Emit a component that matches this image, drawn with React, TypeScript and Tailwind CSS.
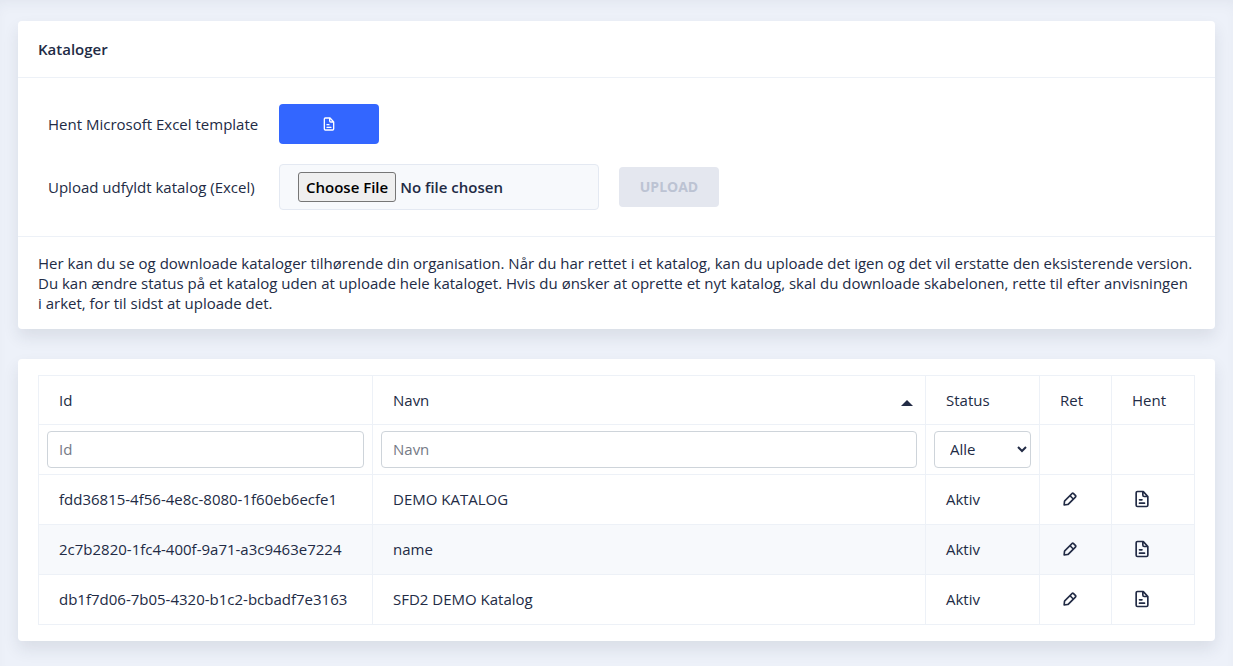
import {useState} from "react";
import type {ReactNode} from "react";

type Katalog = {
  id: string;
  navn: string;
  status: string;
};

const kataloger: Katalog[] = [
  {id: "fdd36815-4f56-4e8c-8080-1f60eb6ecfe1", navn: "DEMO KATALOG", status: "Aktiv"},
  {id: "2c7b2820-1fc4-400f-9a71-a3c9463e7224", navn: "name", status: "Aktiv"},
  {id: "db1f7d06-7b05-4320-b1c2-bcbadf7e3163", navn: "SFD2 DEMO Katalog", status: "Aktiv"},
];

const FileTextIcon = ({className}: {className: string}) => (
  <svg viewBox="0 0 24 24" fill="currentColor" className={className} aria-hidden="true">
    <path d="M15 16H9a1 1 0 0 0 0 2h6a1 1 0 0 0 0-2z" />
    <path d="M9 14h3a1 1 0 0 0 0-2H9a1 1 0 0 0 0 2z" />
    <path d="M19.74 8.33l-5.44-6a1 1 0 0 0-.74-.33h-7A2.53 2.53 0 0 0 4 4.5v15A2.53 2.53 0 0 0 6.56 22h10.88A2.53 2.53 0 0 0 20 19.5V9a1 1 0 0 0-.26-.67zM14 5l2.74 3h-2a.79.79 0 0 1-.74-.85zm3.44 15H6.56a.53.53 0 0 1-.56-.5v-15a.53.53 0 0 1 .56-.5H12v3.15A2.79 2.79 0 0 0 14.71 10H18v9.5a.53.53 0 0 1-.56.5z" />
  </svg>
);

const EditIcon = ({className}: {className: string}) => (
  <svg viewBox="0 0 24 24" fill="currentColor" className={className} aria-hidden="true">
    <path d="M19.4 7.34L16.66 4.6A2 2 0 0 0 14 4.53l-9 9a2 2 0 0 0-.57 1.21L4 18.91a1 1 0 0 0 .29.8A1 1 0 0 0 5 20h.09l4.17-.38a2 2 0 0 0 1.21-.57l9-9a1.92 1.92 0 0 0-.07-2.71zM9.08 17.62l-3 .28.27-3L12 9.32l2.7 2.7zM16 10.68L13.32 8l1.95-2L18 8.73z" />
  </svg>
);

const Card = ({children}: {children: ReactNode}) => (
  <section className="rounded bg-white shadow-[0_8px_16px_0_rgba(44,51,73,0.1)]">
    {children}
  </section>
);

const headCell = "border border-[#edf1f7] px-5 text-left font-normal";
const cell = "border border-[#edf1f7] px-5 pb-0.5";
const filterCell = "border border-[#edf1f7] px-2";
const filterField =
  "block h-[37px] w-full rounded border border-[#ced4da] bg-white px-[11px] pb-0.5 placeholder:text-[#757a86]";

const App = () => {
  const [file, setFile] = useState<File | null>(null);
  const [idFilter, setIdFilter] = useState("");
  const [navnFilter, setNavnFilter] = useState("");
  const [status, setStatus] = useState("");
  const [ascending, setAscending] = useState(true);

  const rows = kataloger
    .filter(
      k =>
        k.id.includes(idFilter) &&
        k.navn.toLowerCase().includes(navnFilter.toLowerCase()) &&
        (status === "" || k.status === status),
    )
    .sort((a, b) => a.navn.localeCompare(b.navn) * (ascending ? 1 : -1));

  return (
    <main className="flex min-h-screen flex-col gap-[30px] bg-[#edf1f9] px-[18px] pt-[21px] pb-[25px] font-['Open_Sans',sans-serif] text-[15px] leading-5 text-[#222b45] shadow-[inset_0_8px_16px_-8px_rgba(44,51,73,0.08)]">
      <Card>
        <h1 className="border-b border-[#edf1f7] px-5 py-[18px] font-semibold">Kataloger</h1>
        <div className="grid grid-cols-[231px_1fr] items-center gap-y-5 border-b border-[#edf1f7] py-[26px] pl-[30px]">
          <span>Hent Microsoft Excel template</span>
          <div>
            <button
              type="button"
              aria-label="Hent template"
              className="flex h-10 w-[100px] items-center justify-center rounded bg-[#3366ff] text-white hover:bg-[#598bff]"
            >
              <FileTextIcon className="h-4 w-4" />
            </button>
          </div>
          <label htmlFor="katalogFil">Upload udfyldt katalog (Excel)</label>
          <div className="flex items-center gap-5">
            <input
              id="katalogFil"
              type="file"
              className="h-[46px] w-80 rounded border border-[#e4e9f2] bg-[#f7f9fc] px-[18px] py-[7px] font-semibold leading-6 file:mr-1 file:h-[30px] file:rounded-[3px] file:border file:border-solid file:border-[#767676] file:bg-[#efefef] file:px-[7px] file:font-semibold file:text-black"
              onChange={e => setFile(e.target.files?.[0] ?? null)}
            />
            <button
              type="button"
              disabled={!file}
              className="h-10 w-[100px] rounded bg-[#3366ff] text-sm font-bold text-white disabled:bg-[#e4e7ef] disabled:text-[#bcc3d3]"
            >
              UPLOAD
            </button>
          </div>
        </div>
        <p className="px-5 py-4">
          Her kan du se og downloade kataloger tilhørende din organisation. Når du har rettet i et
          katalog, kan du uploade det igen og det vil erstatte den eksisterende version. Du kan
          ændre status på et katalog uden at uploade hele kataloget. Hvis du ønsker at oprette et
          nyt katalog, skal du downloade skabelonen, rette til efter anvisningen i arket, for til
          sidst at uploade det.
        </p>
      </Card>

      <Card>
        <div className="px-5 py-4">
          <table className="w-full table-fixed border-collapse">
            <colgroup>
              <col className="w-[334px]" />
              <col />
              <col className="w-[114px]" />
              <col className="w-[72px]" />
              <col className="w-[83px]" />
            </colgroup>
            <thead>
              <tr className="h-[49px]">
                <th className={headCell}>Id</th>
                <th className="border border-[#edf1f7] pr-3 pl-5 text-left font-normal">
                  <button
                    type="button"
                    className="flex w-full items-center justify-between"
                    onClick={() => setAscending(!ascending)}
                  >
                    Navn
                    <svg
                      viewBox="0 0 12 6"
                      fill="currentColor"
                      className={ascending ? "mt-1.5 h-1.5 w-3" : "mt-1.5 h-1.5 w-3 rotate-180"}
                      aria-hidden="true"
                    >
                      <path d="M6 0l6 6H0z" />
                    </svg>
                  </button>
                </th>
                <th className={headCell}>Status</th>
                <th className={headCell}>Ret</th>
                <th className={headCell}>Hent</th>
              </tr>
              <tr className="h-[50px]">
                <td className={filterCell}>
                  <input
                    type="text"
                    aria-label="Id"
                    placeholder="Id"
                    className={filterField}
                    value={idFilter}
                    onChange={e => setIdFilter(e.target.value)}
                  />
                </td>
                <td className={filterCell}>
                  <input
                    type="text"
                    aria-label="Navn"
                    placeholder="Navn"
                    className={filterField}
                    value={navnFilter}
                    onChange={e => setNavnFilter(e.target.value)}
                  />
                </td>
                <td className={filterCell}>
                  <select
                    aria-label="Status"
                    className="block h-[37px] w-full rounded border border-[#ced4da] bg-white pb-0.5 pl-[11px]"
                    value={status}
                    onChange={e => setStatus(e.target.value)}
                  >
                    <option value="">Alle</option>
                    <option value="Aktiv">Aktiv</option>
                    <option value="Inaktiv">Inaktiv</option>
                  </select>
                </td>
                <td className={filterCell}></td>
                <td className={filterCell}></td>
              </tr>
            </thead>
            <tbody>
              {rows.map(k => (
                <tr key={k.id} className="h-[50px] even:bg-[#f7f9fc]">
                  <td className={cell}>{k.id}</td>
                  <td className={cell}>{k.navn}</td>
                  <td className={cell}>{k.status}</td>
                  <td className={cell}>
                    <button type="button" aria-label={`Ret ${k.navn}`} className="block">
                      <EditIcon className="h-5 w-5" />
                    </button>
                  </td>
                  <td className={cell}>
                    <button type="button" aria-label={`Hent ${k.navn}`} className="block">
                      <FileTextIcon className="h-5 w-5" />
                    </button>
                  </td>
                </tr>
              ))}
            </tbody>
          </table>
        </div>
      </Card>
    </main>
  );
};

export default App;
